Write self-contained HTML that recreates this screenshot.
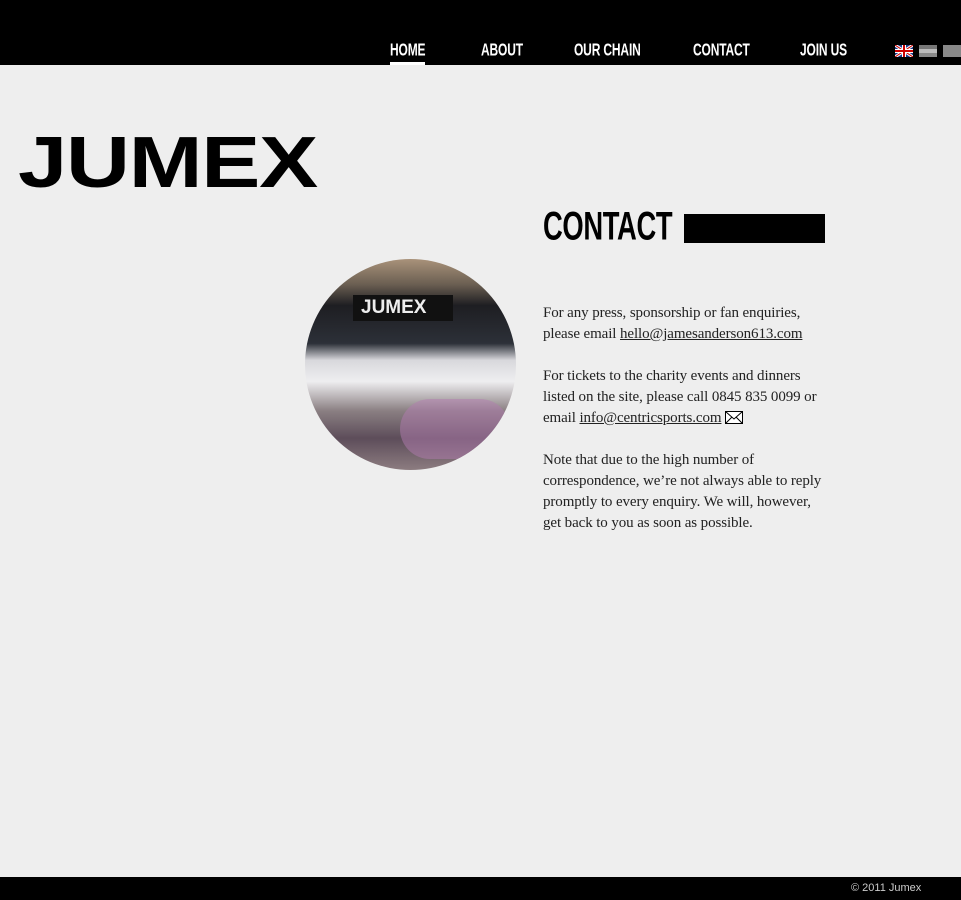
<!DOCTYPE html>
<html><head><meta charset="utf-8"><style>
*{margin:0;padding:0;box-sizing:border-box}
body{width:961px;height:900px;position:relative;overflow:hidden;background:#eeeeee;font-family:"Liberation Serif",serif}
.hdr{position:absolute;left:0;top:0;width:961px;height:65px;background:#000}
.nav{position:absolute;top:41px;color:#fff;font-family:"Liberation Sans",sans-serif;font-weight:bold;font-size:16px;transform:scale(0.75,1.1);transform-origin:left top;letter-spacing:-0.2px;white-space:nowrap}
.ul{position:absolute;left:390px;top:62px;width:35px;height:3px;background:#fff}
.logo{position:absolute;left:18px;top:122px;font-family:"Liberation Sans",sans-serif;font-weight:bold;font-size:72px;transform:scaleX(1.23);transform-origin:left top;color:#000;letter-spacing:-1px}
.h2{position:absolute;left:543px;top:205px;font-family:"Liberation Sans",sans-serif;font-weight:bold;font-size:38px;transform:scale(0.72,1.05);transform-origin:left top;letter-spacing:-0.5px;white-space:nowrap}
.bar{position:absolute;left:684px;top:214px;width:141px;height:29px;background:#000}
.txt{position:absolute;left:543px;top:303px;width:283px;font-size:15px;letter-spacing:-0.1px;line-height:21px;color:#222}
.txt p{margin-bottom:21px}
.txt a{color:#222;text-decoration:underline}
.circ{position:absolute;left:305px;top:259px;width:211px;height:211px;border-radius:50%;overflow:hidden;background:linear-gradient(#a9927a 0%,#6b5f52 12%,#1e1e22 22%,#2c3038 40%,#d8d8dc 48%,#eeeef0 58%,#8a7f82 72%,#5d4d5a 85%,#8c7c80 100%)}
.foot{position:absolute;left:0;top:877px;width:961px;height:23px;background:#000;color:#ccc;font-family:"Liberation Sans",sans-serif;font-size:11px}
</style></head><body>
<div class="hdr"></div>
<div class="nav" style="left:390px">HOME</div>
<div class="nav" style="left:481px">ABOUT</div>
<div class="nav" style="left:574px">OUR CHAIN</div>
<div class="nav" style="left:693px">CONTACT</div>
<div class="nav" style="left:800px">JOIN US</div>
<div class="ul"></div>
<svg style="position:absolute;left:895px;top:45px" width="18" height="12"><rect width="18" height="12" fill="#1a3a8a"/><path d="M0 0L18 12M18 0L0 12" stroke="#fff" stroke-width="3"/><path d="M0 0L18 12M18 0L0 12" stroke="#c00" stroke-width="1"/><path d="M9 0V12M0 6H18" stroke="#fff" stroke-width="4"/><path d="M9 0V12M0 6H18" stroke="#c00" stroke-width="2"/></svg>
<div style="position:absolute;left:919px;top:45px;width:18px;height:12px;background:linear-gradient(#777 0 33%,#bbb 33% 66%,#888 66%)"></div>
<div style="position:absolute;left:943px;top:45px;width:18px;height:12px;background:#888"></div>
<div class="logo">JUMEX</div>
<div class="circ">
<div style="position:absolute;left:48px;top:36px;width:100px;height:26px;background:#111"></div>
<div style="position:absolute;left:56px;top:38px;color:#eee;font-family:'Liberation Sans',sans-serif;font-weight:bold;font-size:19px">JUMEX</div>
<div style="position:absolute;left:95px;top:140px;width:110px;height:60px;background:#b27bb0;opacity:.5;border-radius:30px"></div>
</div>
<div class="h2">CONTACT</div>
<div class="bar"></div>
<div class="txt">
<p>For any press, sponsorship or fan enquiries, please email <a>hello@jamesanderson613.com</a></p>
<p>For tickets to the charity events and dinners listed on the site, please call 0845 835 0099 or email <a>info@centricsports.com</a> <svg width="18" height="13" style="vertical-align:-2px"><rect x="0.5" y="0.5" width="17" height="12" fill="#fff" stroke="#000"/><path d="M0.5 0.5L9 8L17.5 0.5M0.5 12.5L7 6M17.5 12.5L11 6" stroke="#000" fill="none"/></svg></p>
<p>Note that due to the high number of correspondence, we’re not always able to reply promptly to every enquiry. We will, however, get back to you as soon as possible.</p>
</div>
<div class="foot"><span style="position:absolute;left:851px;top:5px">© 2011 Jumex</span></div>
</body></html>
